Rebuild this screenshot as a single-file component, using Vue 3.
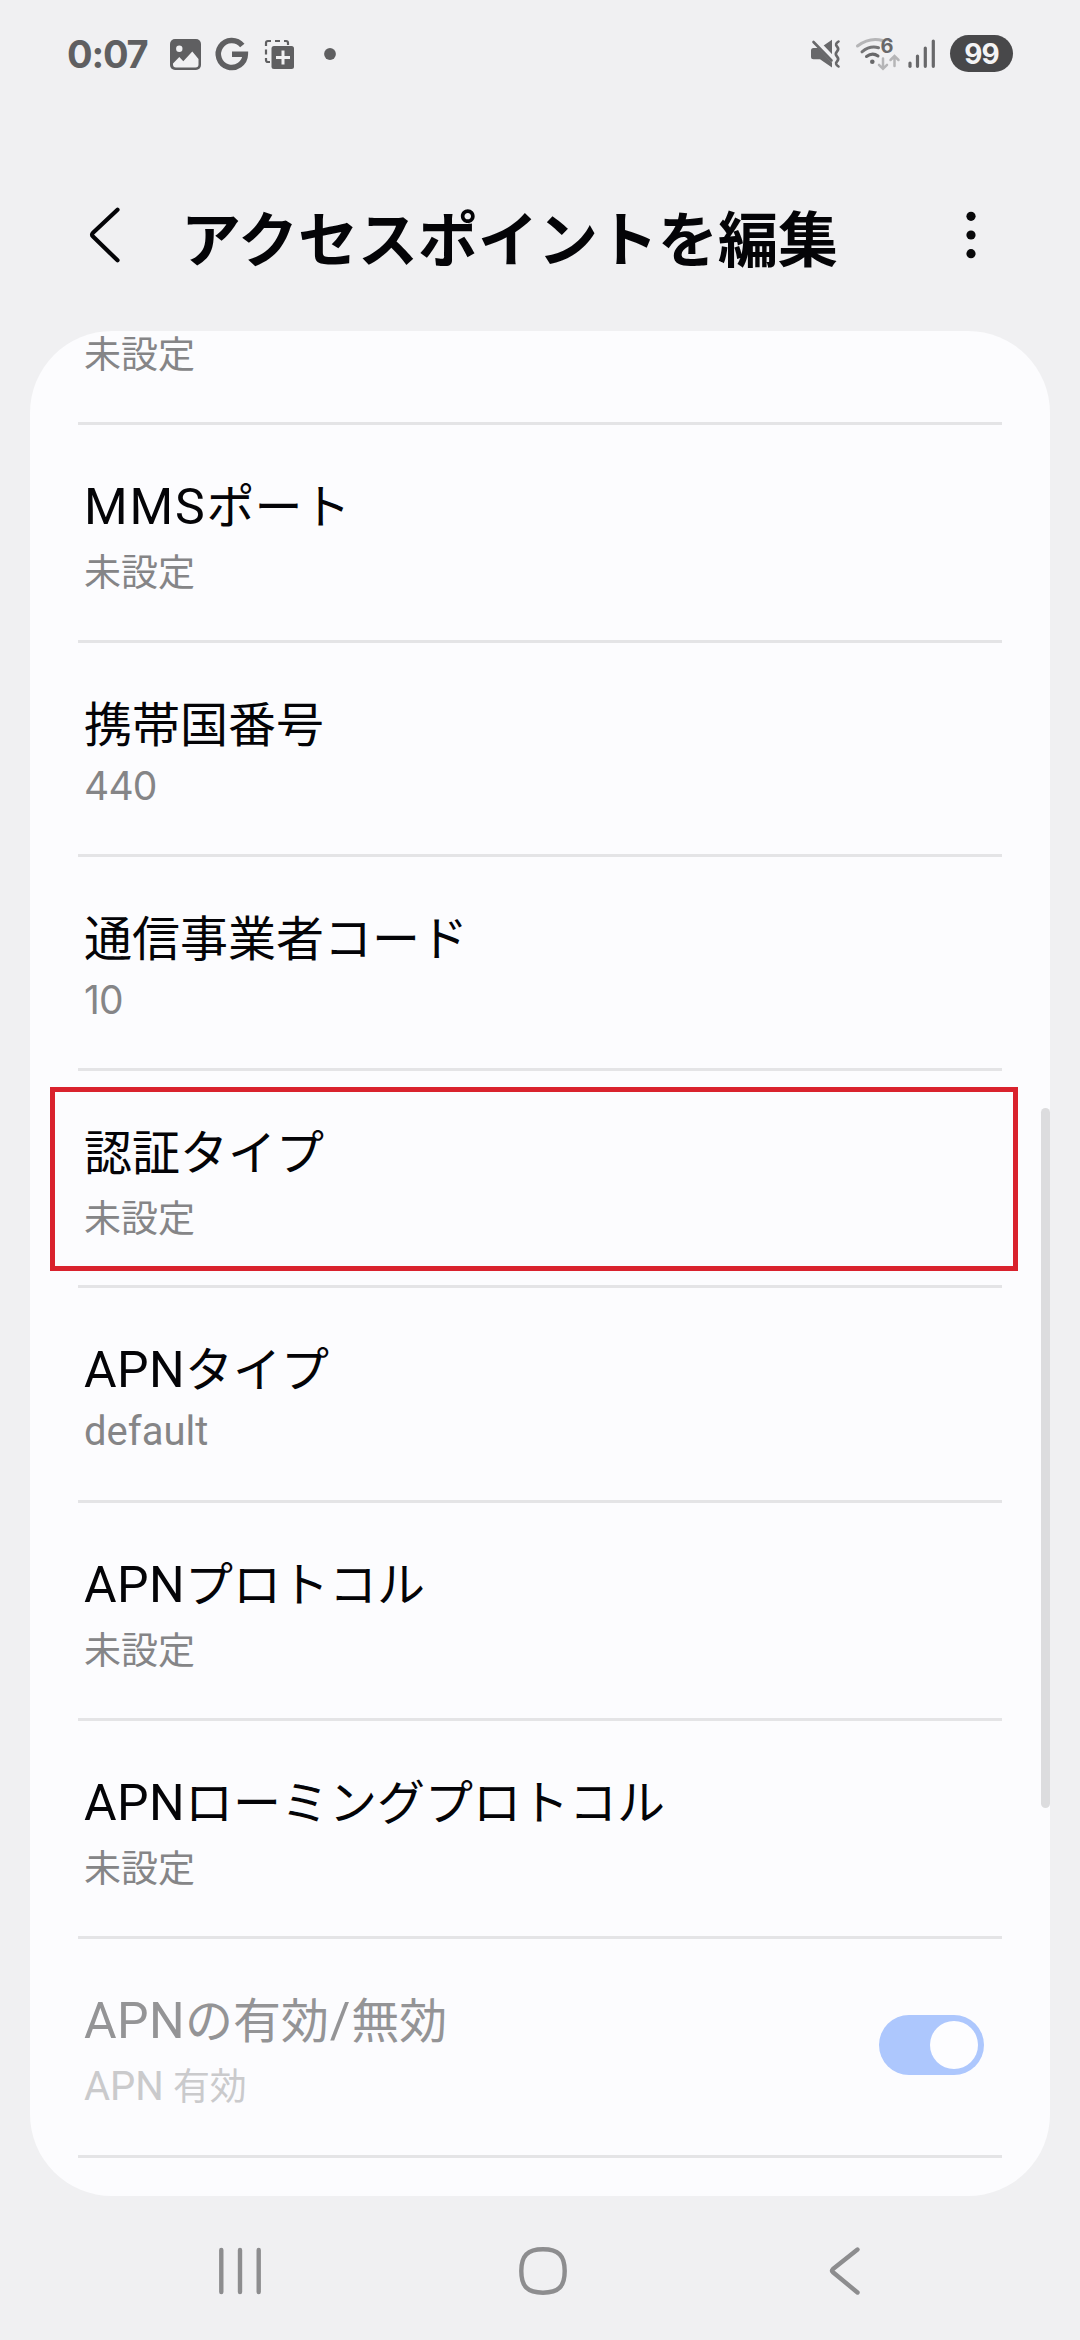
<script setup>
// Sub lines in Latin script sit slightly higher than Japanese ones.
const rows = [
  { latin: 'MMS', label: 'ポート', sub: '未設定' },
  { label: '携帯国番号', value: '440', kind: 'digits' },
  { label: '通信事業者コード', value: '10', kind: 'digits' },
  { label: '認証タイプ', sub: '未設定', marked: true },
  { latin: 'APN', label: 'タイプ', value: 'default', kind: 'word' },
  { latin: 'APN', label: 'プロトコル', sub: '未設定' },
  { latin: 'APN', label: 'ローミングプロトコル', sub: '未設定' },
]
</script>

<template>
  <div class="screen">
    <header class="status">
      <div class="status-left">
        <span class="clock">0:07</span>
        <svg class="notif" width="166" height="40" viewBox="170 34 166 40">
          <rect x="170" y="39" width="31" height="31" rx="5" fill="#5f5f61" />
          <circle cx="179.300" cy="48.700" r="3.200" fill="#f0f0f2" />
          <path d="M173 63.500l6.300-6.500 4 4.200 9-9.700 6.200 7.500v5.500q0 3-3 3h-19.500q-3 0-3-3z" fill="#f0f0f2" />
          <path d="M242.300 45.500A13.500 13.500 0 1 0 245.300 54.300H232" fill="none" stroke="#5f5f61" stroke-width="5.600" />
          <path d="M266 46v-3q0-2 2-2h3M266 49.500v5M266 58v2q0 2 2 2h2M275 41h5M284 41h2q2 0 2 2v2" fill="none" stroke="#5f5f61" stroke-width="2.200" />
          <rect x="271.500" y="46" width="22.500" height="23" rx="2.500" fill="#5f5f61" />
          <path d="M283 50.500v14M276 57.500h14" stroke="#f0f0f2" stroke-width="3" fill="none" />
          <circle cx="330" cy="54" r="5.900" fill="#5f5f61" />
        </svg>
      </div>
      <div class="status-right">
        <svg width="128" height="40" viewBox="808 34 128 40" fill="none" stroke-linecap="round">
          <path d="M813.500 48h6.500l12-8.300v27.800l-12-8.300h-6.500q-2.500 0-2.500-2.500v-6.200q0-2.500 2.500-2.500z" fill="#68686a" />
          <path d="M813 38.500l21 22" stroke="#f0f0f2" stroke-width="6" />
          <path d="M813.500 42l18 18.500" stroke="#68686a" stroke-width="2.600" />
          <path d="M838.500 41.500q-4 2.500-1.500 5t0 5-0 5 0 5 1.500 5" stroke="#68686a" stroke-width="2.600" />
          <path d="M857.500 46q12-9 25-5.500" stroke="#b5b5b7" stroke-width="3" />
          <path d="M862 51.800q8-6.500 16.500-4" stroke="#747476" stroke-width="3" />
          <path d="M866.500 56.500q6-4.500 11.500-.5" stroke="#68686a" stroke-width="3" />
          <circle cx="872.300" cy="61.800" r="2.300" fill="#68686a" />
          <path d="M883 58.500v10M879 64.800l4 4 4-4M894.500 66v-9.500M890.500 60l4-4 4 4" stroke="#b5b5b7" stroke-width="2.500" />
          <path d="M910 63v3.300" stroke="#68686a" stroke-width="3.200" />
          <path d="M917.500 56v10.300M925.300 48v18.300M933.300 41v25.300" stroke="#68686a" stroke-width="3.200" />
          <text x="880.500" y="52.800" class="gen">6</text>
        </svg>
        <span class="battery">99</span>
      </div>
    </header>

    <div class="titlebar">
      <svg class="back" width="34" height="60" viewBox="0 0 34 60">
        <path d="M29.500 4.700L5 27.800q-2 1.900 0 3.800l24.500 23.700" fill="none" stroke="#040407" stroke-width="4.200" stroke-linecap="round" />
      </svg>
      <h1>アクセスポイントを編集</h1>
      <svg class="more" width="10" height="48" viewBox="0 0 10 48">
        <circle v-for="n in 3" :key="n" cx="5" :cy="n * 18.700 - 13.400" r="4.600" fill="#08080a" />
      </svg>
    </div>

    <main class="card">
      <div class="partial"><div class="sub">未設定</div></div>
      <section v-for="row in rows" :key="(row.latin || '') + row.label" class="row" :class="{ marked: row.marked, tall: row.kind === 'word' }">
        <div class="label"><span v-if="row.latin" class="latin" :class="row.latin.toLowerCase()">{{ row.latin }}</span>{{ row.label }}</div>
        <div v-if="row.sub" class="sub">{{ row.sub }}</div>
        <div v-else class="sub value"><span class="latin" :class="row.kind">{{ row.value }}</span></div>
        <div v-if="row.marked" class="outline"></div>
      </section>
      <section class="row switch-row">
        <div>
          <div class="label dim"><span class="latin apn">APN</span>の有効<span class="latin slash">/</span>無効</div>
          <div class="sub faint"><span class="latin">APN</span><span class="gap"></span>有効</div>
        </div>
        <div class="toggle"><div class="knob"></div></div>
      </section>
      <div class="end"></div>
    </main>
    <div class="scrollbar"></div>

    <nav class="nav">
      <svg width="42" height="50" viewBox="0 0 42 50"><path d="M2.300 4v42M21 4v42M39.700 4v42" stroke="#8d8d8f" stroke-width="4.400" stroke-linecap="round" /></svg>
      <svg class="home" width="48" height="48" viewBox="0 0 48 48"><path d="M24 2.300C39.500 2.300 45.700 8.500 45.700 24S39.500 45.700 24 45.700 2.300 39.500 2.300 24 8.500 2.300 24 2.300z" fill="none" stroke="#8d8d8f" stroke-width="4.400" /></svg>
      <svg width="32" height="50" viewBox="0 0 32 50"><path d="M28.500 3.500L3.700 23.300q-1.500 1.300 0 2.700l24.800 20.500" fill="none" stroke="#8d8d8f" stroke-width="4.400" stroke-linecap="round" /></svg>
    </nav>
  </div>
</template>

<style>
body {
  margin: 0;
  background: #f0f0f2;
}
</style>

<style scoped>
.screen {
  position: relative;
  width: 1080px;
  height: 2340px;
  overflow: hidden;
  display: flex;
  flex-direction: column;
  background: #f0f0f2;
  font-family: "Noto Sans CJK JP", sans-serif;
  color: #040407;
}
svg {
  display: block;
  flex: none;
}
.status {
  height: 108px;
  box-sizing: border-box;
  padding: 34px 67px 0 67px;
  display: flex;
  justify-content: space-between;
}
.status-left,
.status-right {
  display: flex;
  height: 40px;
}
.clock {
  width: 103px;
  font: 700 38px/40px Inter, sans-serif;
  letter-spacing: -1.2px;
  color: #5f5f61;
}
.status-right {
  gap: 14px;
}
.gen {
  font: 700 20px Inter, sans-serif;
  fill: #68686a;
}
.battery {
  width: 63px;
  height: 37px;
  margin-top: 1px;
  border-radius: 19px;
  background: #48484a;
  color: #f4f4f5;
  font: 700 28px/38px Inter, sans-serif;
  letter-spacing: -1px;
  text-align: center;
}
.titlebar {
  height: 223px;
  box-sizing: border-box;
  padding: 97px 104px 0 88px;
  display: flex;
  align-items: flex-start;
}
h1 {
  margin: -9px auto 0 59px;
  font-size: 60px;
  line-height: 80px;
  font-weight: 700;
  white-space: nowrap;
}
.more {
  margin-top: 6px;
}
.card {
  width: 1020px;
  height: 1864.500px;
  margin: 0 auto 0 30px;
  border-radius: 82px;
  overflow: hidden;
  background: #fcfcfe;
}
.partial {
  padding: 0 0 49px 54px;
}
.partial .sub {
  margin-top: 0;
  line-height: 42px;
}
.row {
  position: relative;
  margin: 0 48px;
  padding: 48px 6px 43px;
  border-top: 3px solid #e4e4e6;
}
.label {
  font-size: 48px;
  line-height: 60px;
  white-space: nowrap;
}
.sub {
  margin-top: 10px;
  font-size: 37px;
  line-height: 54px;
  color: #858587;
  white-space: nowrap;
}
.value {
  line-height: 46px;
  margin-bottom: 4px;
}
.tall .value {
  margin-bottom: 5px;
}
.marked {
  padding-bottom: 42px;
}
.latin {
  font-family: Roboto, sans-serif;
  font-size: 50px;
  line-height: 0;
}
.mms {
  letter-spacing: 1.800px;
}
.apn {
  letter-spacing: 0.400px;
}
.slash {
  margin: 0 0.800px;
}
.sub .latin {
  font-size: 40px;
}
.sub .digits {
  font-family: Inter, sans-serif;
  font-size: 39px;
  letter-spacing: -0.800px;
}
.outline {
  position: absolute;
  left: -28px;
  top: 16px;
  width: 958px;
  height: 174px;
  border: 5px solid #d9222d;
}
.switch-row {
  display: flex;
  justify-content: space-between;
  padding-bottom: 44px;
}
.dim {
  color: #949496;
}
.faint {
  color: #cacacc;
}
.gap {
  display: inline-block;
  width: 9px;
}
.toggle {
  width: 105px;
  height: 60px;
  box-sizing: border-box;
  margin: 28px 12px 0 0;
  padding: 6px;
  border-radius: 30px;
  background: #adc7fd;
}
.knob {
  width: 48px;
  height: 48px;
  margin-left: auto;
  border-radius: 50%;
  background: #fdfdff;
}
.end {
  margin: 0 48px;
  border-top: 3px solid #e4e4e6;
}
.scrollbar {
  position: absolute;
  left: 1041px;
  top: 1108px;
  width: 9px;
  height: 700px;
  border-radius: 5px;
  background: #dcdcde;
}
.nav {
  flex: 1;
  box-sizing: border-box;
  padding: 6px 219px 0;
  display: flex;
  align-items: center;
  justify-content: space-between;
}
.home {
  margin-right: 5px;
}
</style>
